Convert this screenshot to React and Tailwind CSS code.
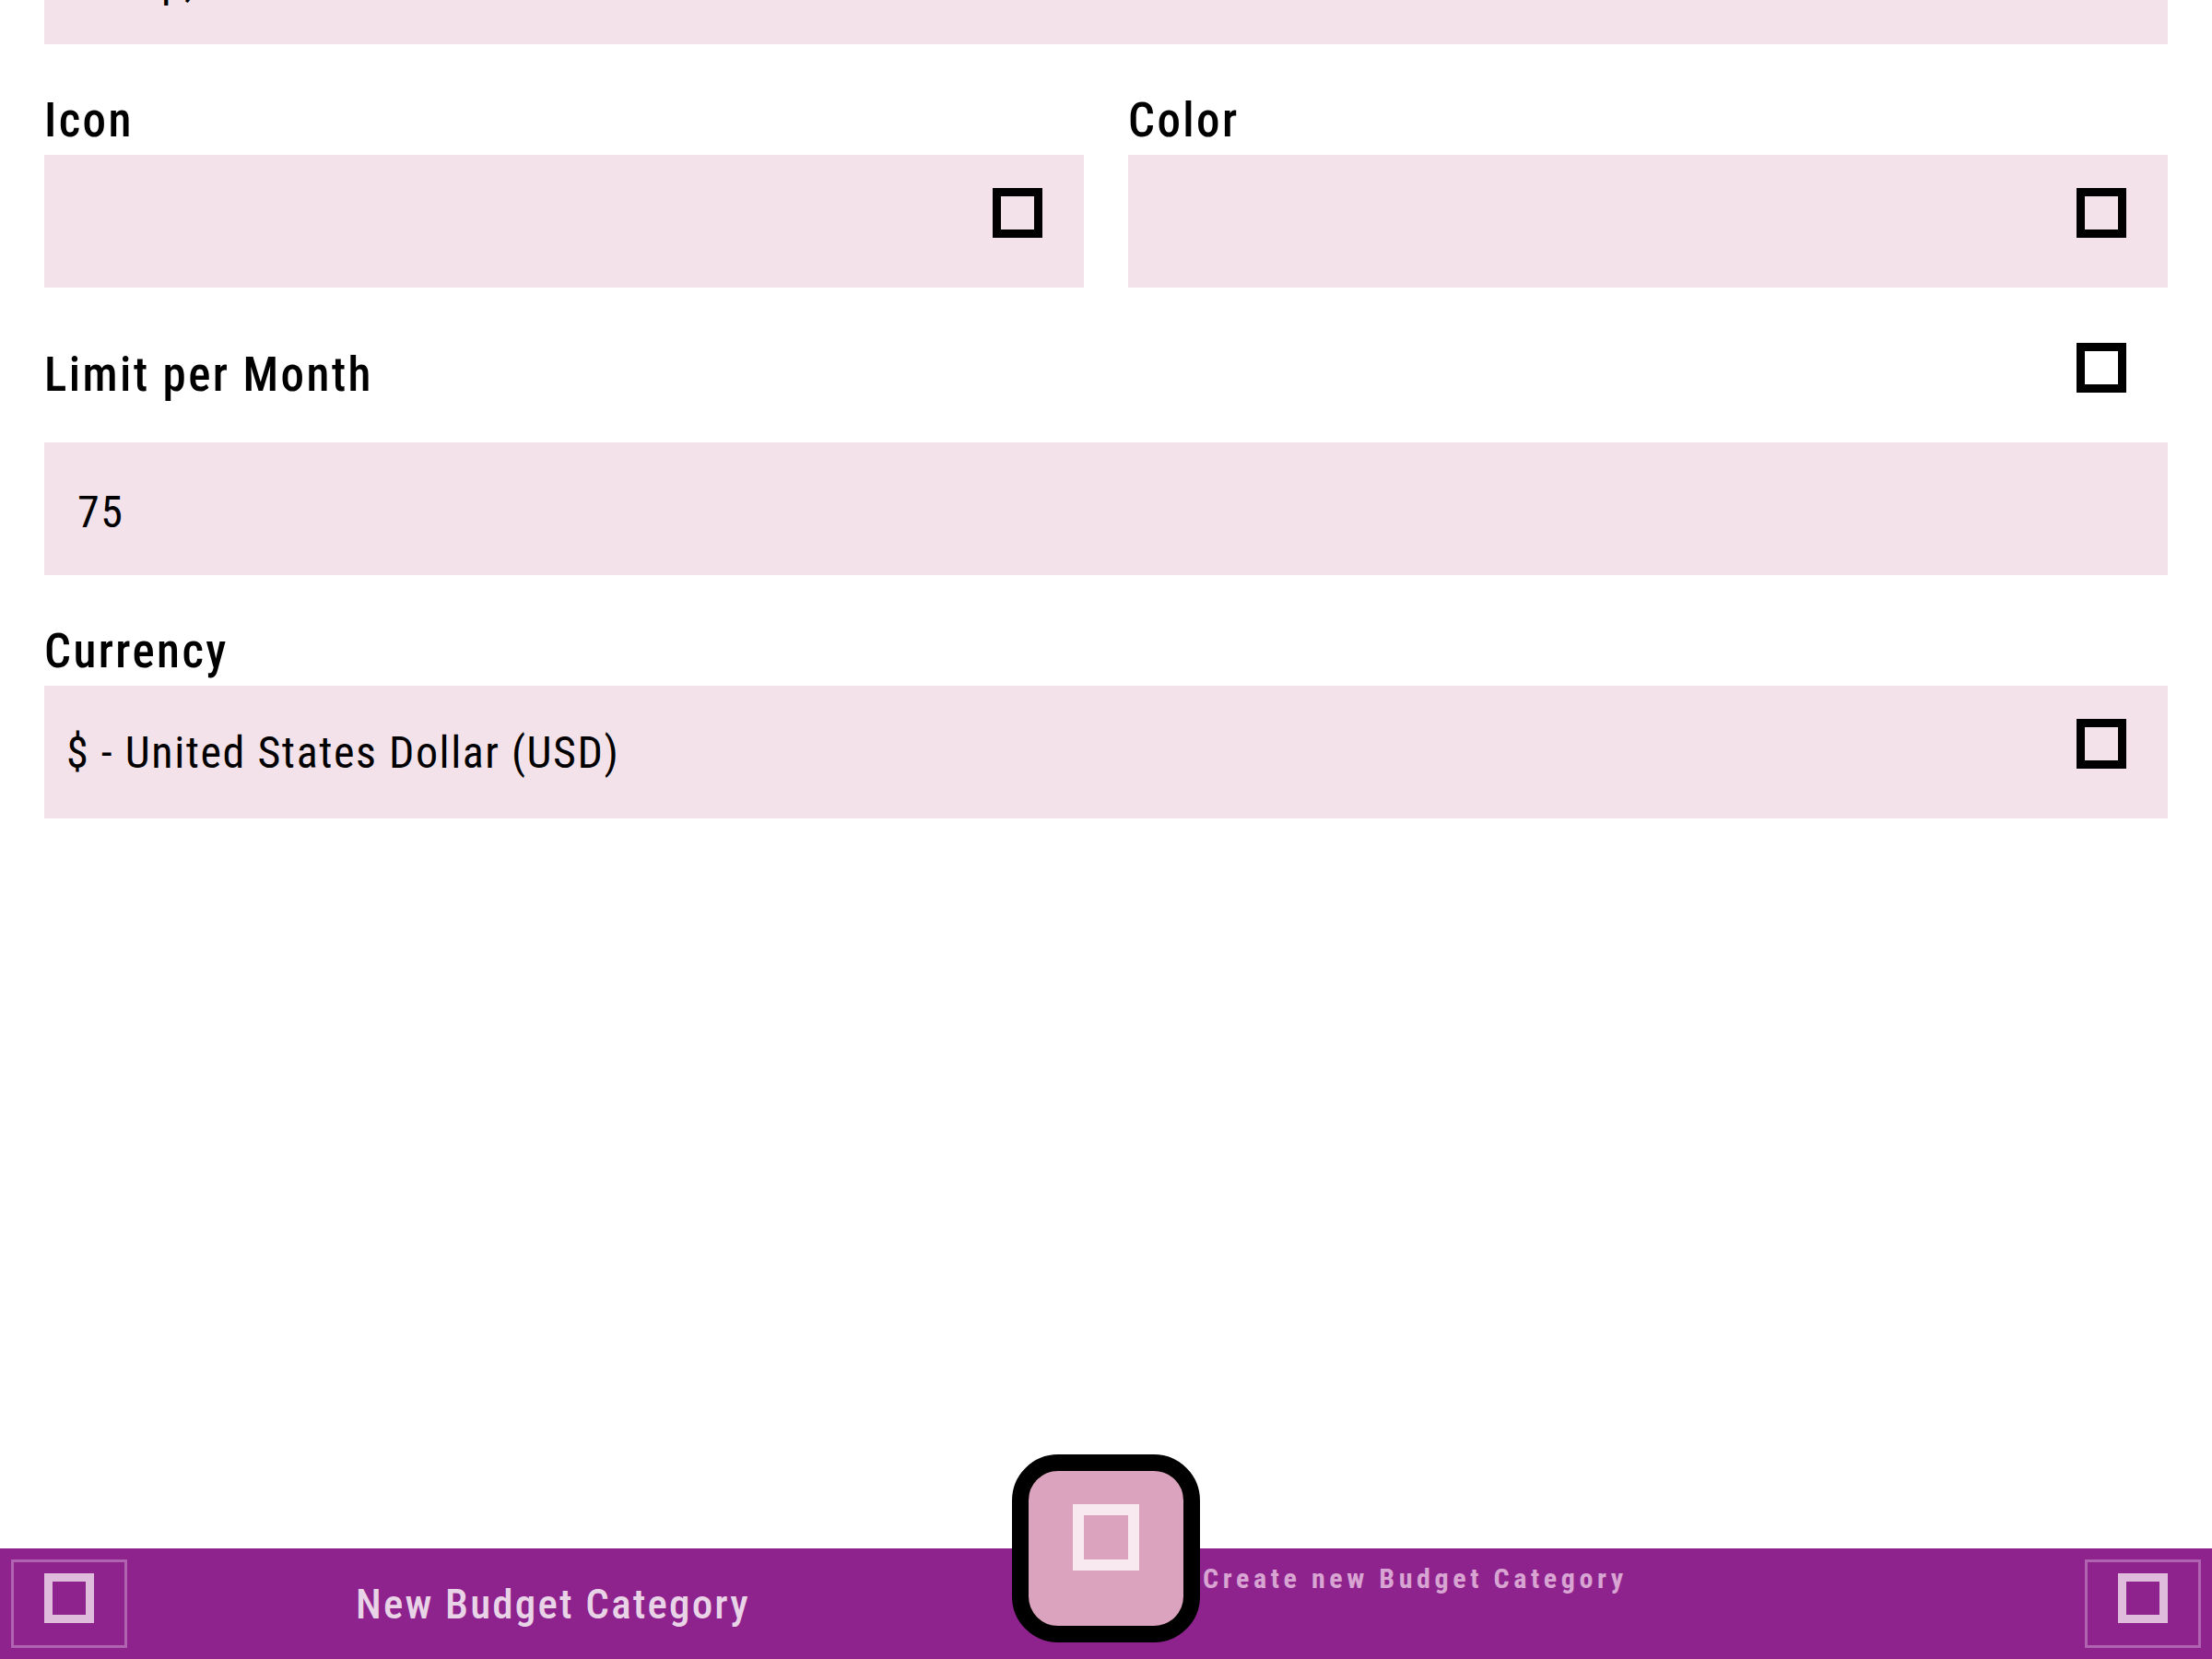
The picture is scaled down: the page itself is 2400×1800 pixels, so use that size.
const Tofu = ({ className = "" }) => (
  <span className={`block w-[54px] h-[54px] border-[9px] shrink-0 ${className}`} />
);

const Label = ({ children, className = "" }) => (
  <div className={`h-[60px] text-[51px] leading-[60px] font-medium tracking-[2.4px] text-black ${className}`}>{children}</div>
);

const SelectBox = () => (
  <div className="mt-[7px] h-[144px] bg-[#f3e2ea] flex items-center justify-end pr-[45px]">
    <Tofu className="border-black mb-[18px]" />
  </div>
);

export default function App() {
  return (
    <div className="h-[1800px] w-full flex flex-col bg-white overflow-hidden font-['Roboto','Liberation_Sans',sans-serif] font-stretch-semi-condensed">
      <main className="flex-1 px-[48px] flex flex-col">
        {/* name field, scrolled mostly out of view */}
        <div className="-mt-[96px] h-[144px] bg-[#f3e2ea] flex items-center pl-[36px] pt-[7px]">
          <span className="text-[48px] leading-[56px] tracking-[1.55px] text-black">Setup, rent and bills</span>
        </div>

        <div className="mt-[53px] grid grid-cols-2 gap-x-[48px]">
          <div>
            <Label>Icon</Label>
            <SelectBox />
          </div>
          <div>
            <Label>Color</Label>
            <SelectBox />
          </div>
        </div>

        <div className="mt-[60px] flex items-start justify-between">
          <Label className="mt-[5px]">Limit per Month</Label>
          <Tofu className="border-black mr-[45px]" />
        </div>

        <div className="mt-[43px] h-[144px] bg-[#f3e2ea] flex items-center pl-[36px] pt-[7px]">
          <span className="text-[48px] leading-[56px] tracking-[1.55px] text-black">75</span>
        </div>

        <Label className="mt-[53px]">Currency</Label>
        <div className="mt-[7px] h-[144px] bg-[#f3e2ea] flex items-center justify-between pl-[24px] pr-[45px]">
          <span className="pt-[2px] text-[48px] leading-[56px] tracking-[1.55px] text-black">$ - United States Dollar (USD)</span>
          <Tofu className="border-black mb-[18px]" />
        </div>
      </main>

      <footer className="relative h-[120px] shrink-0 bg-[#8e238e] flex">
        <div className="w-[1200px] grid grid-cols-[150px_1fr_150px]">
          <button className="ml-[12px] mt-[12px] w-[126px] h-[96px] border-[3px] border-[#b064b0] flex items-center justify-center">
            <Tofu className="border-[#dfbbdc] mb-[12px]" />
          </button>
          <div className="pt-[34px] text-center text-[45px] leading-[53px] font-medium tracking-[2.2px] text-[#e9d3e7]">
            New Budget Category
          </div>
        </div>
        <div className="flex-1 flex justify-end">
          <button className="mr-[12px] mt-[12px] w-[126px] h-[96px] border-[3px] border-[#b064b0] flex items-center justify-center">
            <Tofu className="border-[#dfbbdc] mb-[12px]" />
          </button>
        </div>

        {/* floating action button and its hint */}
        <button className="absolute left-[1098px] -top-[102px] w-[204px] h-[204px] rounded-[50px] border-[18px] border-black bg-[#dba3bd] flex items-center justify-center">
          <span className="block w-[72px] h-[72px] border-[12px] border-[#f8e9f0] mb-[24px]" />
        </button>
        <div className="absolute left-[1305px] top-[15px] text-[30px] leading-[36px] font-bold tracking-[4.6px] text-[#d8a4d2] whitespace-nowrap">
          Create new Budget Category
        </div>
      </footer>
    </div>
  );
}
